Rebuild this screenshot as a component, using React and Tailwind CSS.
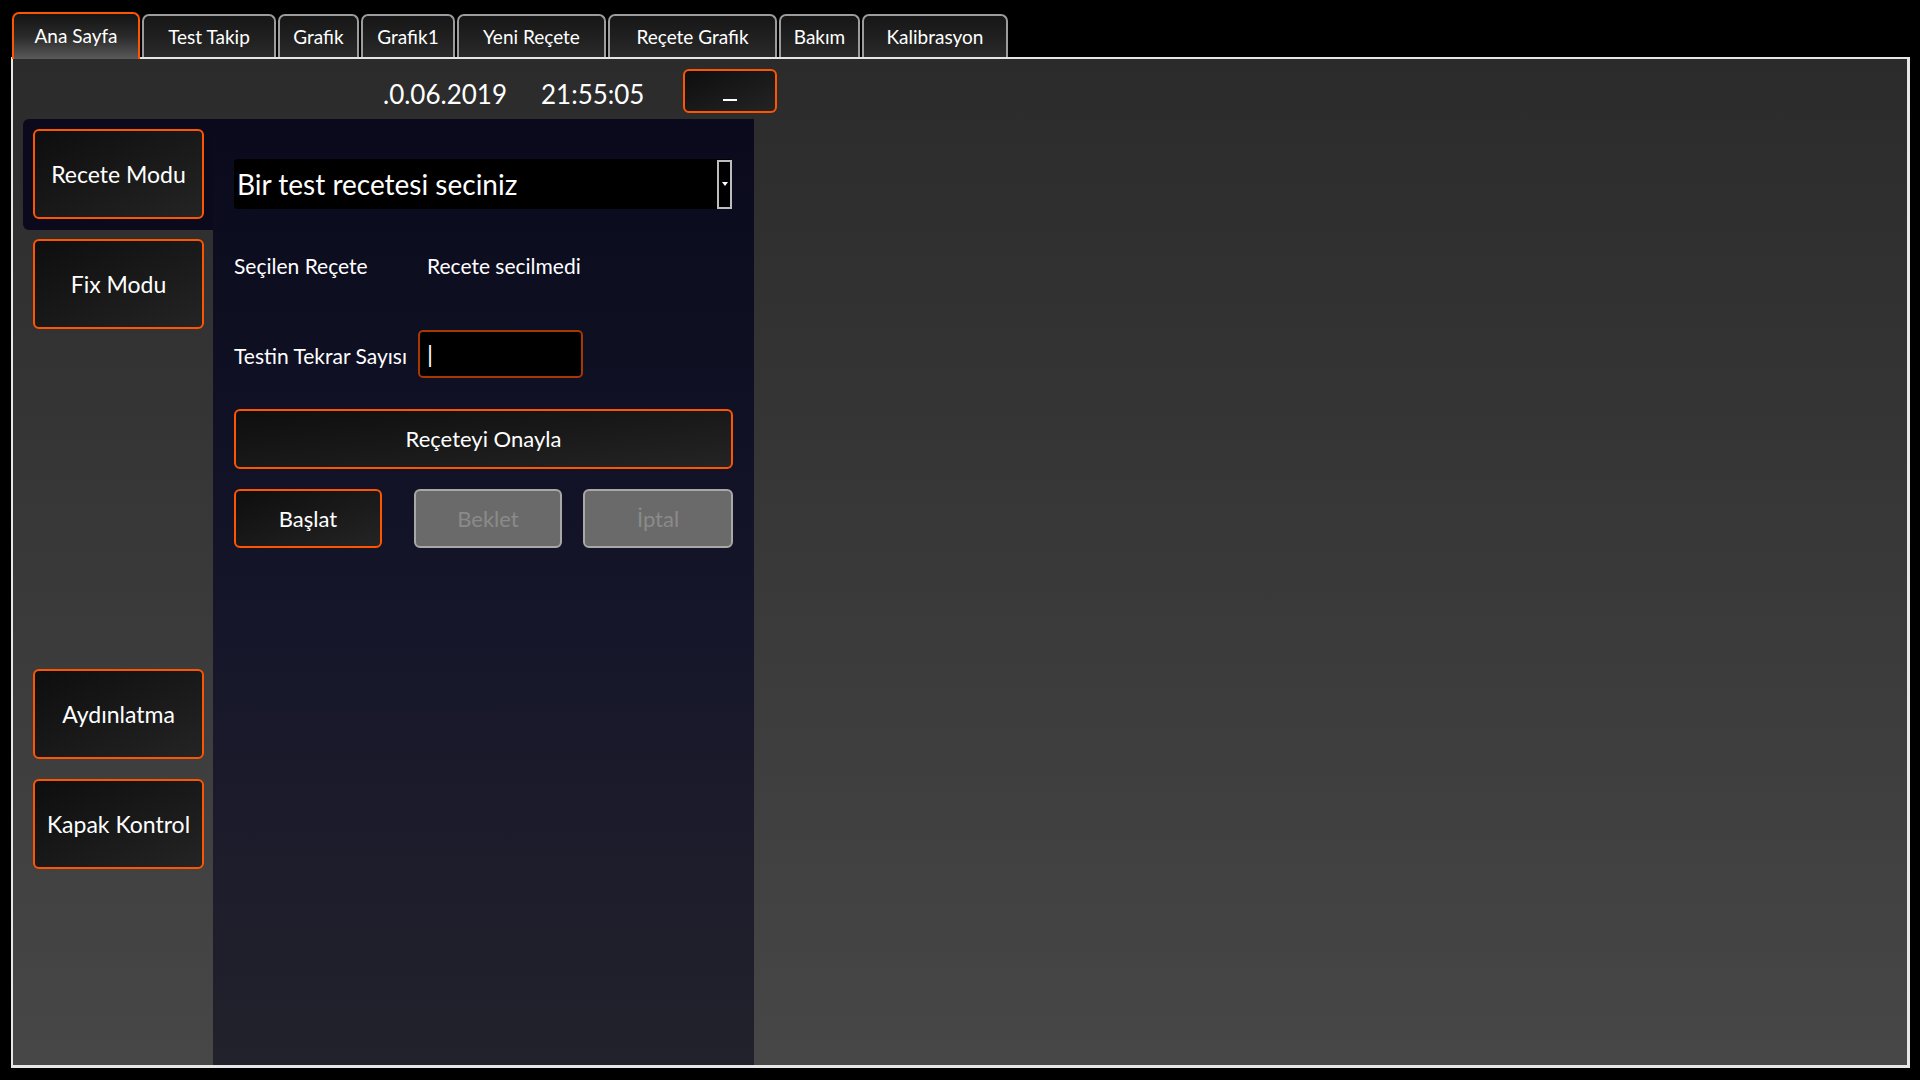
const tabs = ['Ana Sayfa', 'Test Takip', 'Grafik', 'Grafik1', 'Yeni Reçete', 'Reçete Grafik', 'Bakım', 'Kalibrasyon'];
const tabWidths = [128, 134, 81, 94, 149, 169, 81, 146];

const OrangeButton = ({ children, className = '' }) => (
  <button className={`flex items-center justify-center rounded-[6px] border-2 border-[#ff5500] bg-gradient-to-br from-[#0e0e0e] to-[#242424] text-white ${className}`}>
    {children}
  </button>
);

const GreyButton = ({ children, className = '' }) => (
  <button className={`flex items-center justify-center rounded-[6px] border-2 border-[#a8a8a8] bg-[#6a6a6a] text-[#8a8a8a] ${className}`}>
    {children}
  </button>
);

export default function App() {
  return (
    <div className="w-[1920px] h-[1080px] bg-black overflow-hidden font-['Lato',sans-serif] text-white">
      {/* tab strip */}
      <div className="flex items-end h-[57px] pl-[12px] gap-[2px]">
        {tabs.map((t, i) => (
          i === 0 ? (
            <div key={t} style={{ width: tabWidths[i] }}
              className="relative z-10 h-[47px] mb-[-2px] flex items-center justify-center rounded-t-[7px] border-2 border-b-0 border-[#ff5500] bg-gradient-to-b from-[#141414] via-[#2a2a2a] to-[#5a5a5a] text-[19px] pb-[1px]">
              {t}
            </div>
          ) : (
            <div key={t} style={{ width: tabWidths[i] }}
              className="h-[43px] flex items-center justify-center rounded-t-[7px] border-2 border-b-0 border-[#9c9c9c] bg-gradient-to-b from-[#161616] to-[#2a2a2a] text-[19px] pt-[2px]">
              {t}
            </div>
          )
        ))}
      </div>

      {/* main panel */}
      <div className="ml-[11px] w-[1899px] h-[1011px] border-2 border-r-[3px] border-b-[3px] border-[#e6e6e6] bg-gradient-to-b from-[#2b2b2b] to-[#474747] flex flex-col">
        {/* header */}
        <div className="h-[60px] flex items-center shrink-0">
          <span className="ml-[370px] text-[26px] leading-none mt-[10px]">.0.06.2019</span>
          <span className="ml-[34px] text-[26px] leading-none mt-[10px]">21:55:05</span>
          <OrangeButton className="ml-[39px] w-[94px] h-[44px] mt-[3px] items-end pb-[6px]">
            <span className="block w-[14px] h-[2px] bg-white mb-[4px]" />
          </OrangeButton>
        </div>

        {/* body */}
        <div className="flex flex-1 min-h-0">
          {/* sidebar */}
          <div className="w-[200px] pl-[10px] flex flex-col shrink-0">
            <div className="bg-[#0a0a1c] rounded-tl-[6px] rounded-bl-[6px] pt-[10px] pb-[11px] pl-[10px]">
              <OrangeButton className="w-[171px] h-[90px] text-[23px]">Recete Modu</OrangeButton>
            </div>
            <div className="pl-[10px] mt-[9px]">
              <OrangeButton className="w-[171px] h-[90px] text-[23px]">Fix Modu</OrangeButton>
            </div>
            <div className="pl-[10px] mt-[340px]">
              <OrangeButton className="w-[171px] h-[90px] text-[23px]">Aydınlatma</OrangeButton>
            </div>
            <div className="pl-[10px] mt-[20px]">
              <OrangeButton className="w-[171px] h-[90px] text-[23px]">Kapak Kontrol</OrangeButton>
            </div>
          </div>

          {/* content */}
          <div className="w-[541px] bg-gradient-to-b from-[#0a0a1c] via-[#15152a] to-[#22222c] pl-[21px] pt-[40px] shrink-0">
            <div className="w-[498px] h-[50px] bg-black rounded-[4px] flex items-center">
              <span className="flex-1 pl-[3px] text-[28px] leading-none">Bir test recetesi seciniz</span>
              <div className="w-[15px] h-[49px] border-2 border-[#bdbdbd] bg-black flex items-center justify-center">
                <svg width="6" height="4" viewBox="0 0 6 4"><path d="M0 0h6L3 4z" fill="#fff" /></svg>
              </div>
            </div>

            <div className="flex items-center mt-[41px] text-[21px]">
              <span className="w-[193px]">Seçilen Reçete</span>
              <span>Recete secilmedi</span>
            </div>

            <div className="flex items-center mt-[48px] text-[21px]">
              <span className="w-[184px] pt-[4px]">Testin Tekrar Sayısı</span>
              <div className="w-[165px] h-[48px] rounded-[5px] border-2 border-[#a83800] bg-black flex items-center pl-[7px] text-[24px]">
                |
              </div>
            </div>

            <OrangeButton className="mt-[31px] w-[499px] h-[60px] text-[22px]">Reçeteyi Onayla</OrangeButton>

            <div className="flex mt-[20px] text-[22px]">
              <OrangeButton className="w-[148px] h-[59px]">Başlat</OrangeButton>
              <GreyButton className="ml-[32px] w-[148px] h-[59px]">Beklet</GreyButton>
              <GreyButton className="ml-[21px] w-[150px] h-[59px]">İptal</GreyButton>
            </div>
          </div>
        </div>
      </div>
    </div>
  );
}
